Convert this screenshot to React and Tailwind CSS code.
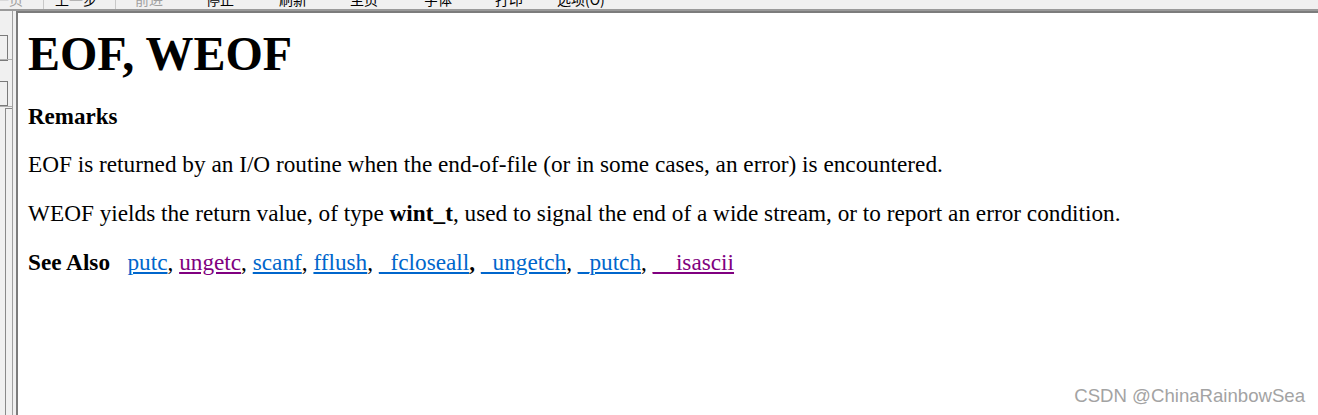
import React from 'react';

const toolbarItems = [
    { label: '上一页', disabled: true, left: -19 },
    { label: '上一步', left: 55 },
    { label: '前进', disabled: true, left: 135 },
    { label: '停止', left: 206 },
    { label: '刷新', left: 279 },
    { label: '主页', left: 350 },
    { label: '字体', left: 424 },
    { label: '打印', left: 495 },
    { label: '选项(O)', left: 557 },
];

const links = [
    { text: 'putc' },
    { text: 'ungetc', visited: true },
    { text: 'scanf' },
    { text: 'fflush' },
    { text: '_fcloseall', boldComma: true },
    { text: '_ungetch' },
    { text: '_putch' },
    { text: '__isascii', visited: true },
];

const App = () => {
    return (
        <div className="w-[1318px] h-[415px] overflow-hidden bg-[#f0f0f0] flex flex-col">
            {/* toolbar, cut off at the top of the shot */}
            <div className="relative h-[11px] shrink-0 overflow-hidden border-b-2 border-[#9a9a9a] font-['Noto_Sans_CJK_SC',sans-serif] text-[14px] leading-[14px]">
                <div className="absolute top-0 left-[43px] w-px h-full bg-[#c8c8c8]"></div>
                <div className="absolute top-0 left-[115px] w-px h-full bg-[#c8c8c8]"></div>
                {toolbarItems.map((item) => (
                    <span
                        key={item.label}
                        className={`absolute top-[-8px] whitespace-nowrap ${item.disabled ? 'text-[#a0a0a0]' : 'text-black'}`}
                        style={{ left: item.left }}
                    >
                        {item.label}
                    </span>
                ))}
            </div>

            <div className="flex flex-1 min-h-0">
                {/* left tab pane */}
                <div className="w-[12px] shrink-0 flex flex-col pt-[24px]">
                    <div className="h-[26px] w-[8px] border border-l-0 border-[#7a7a7a]"></div>
                    <div className="h-px w-[12px] bg-[#b0b0b0] mt-[-2px]"></div>
                    <div className="h-[21px]"></div>
                    <div className="h-[25px] w-[8px] border border-l-0 border-[#7a7a7a]"></div>
                    <div className="h-px w-[12px] bg-[#b0b0b0]"></div>
                    <div className="flex-1 w-[8px] ml-[5px] mt-[1px] border-l border-t border-[#8a8a8a]"></div>
                </div>
                <div className="w-px shrink-0 bg-[#a0a0a0]"></div>
                <div className="w-[3px] shrink-0"></div>

                {/* content */}
                <div className="flex-1 bg-white border-l-2 border-t-2 border-[#7c7c7c] pl-[10px] font-['Liberation_Serif',serif] text-black">
                    <h1 className="text-[48px] font-bold leading-[54px] mt-[14px]">EOF, WEOF</h1>
                    <h4 className="text-[23px] font-bold leading-[27px] mt-[22px]">Remarks</h4>
                    <p className="text-[23.25px] leading-[27px] mt-[21px]">
                        EOF is returned by an I/O routine when the end-of-file (or in some cases, an error) is encountered.
                    </p>
                    <p className="text-[23.25px] leading-[27px] mt-[22px]">
                        WEOF yields the return value, of type <b>wint_t</b>, used to signal the end of a wide stream, or to report an error condition.
                    </p>
                    <p className="text-[23.25px] leading-[27px] mt-[22px] whitespace-pre">
                        <b>See Also</b>{'   '}
                        {links.map((link, i) => (
                            <React.Fragment key={link.text}>
                                <a className={`underline ${link.visited ? 'text-[#800080]' : 'text-[#0066cc]'}`}>{link.text}</a>
                                {i < links.length - 1 && (link.boldComma ? <b>, </b> : ', ')}
                            </React.Fragment>
                        ))}
                    </p>
                </div>
            </div>

            {/* watermark */}
            <div className="relative">
                <span className="absolute right-[13px] bottom-[5px] font-['Liberation_Sans',sans-serif] text-[18.6px] text-[#a3a3a3] whitespace-nowrap">
                    CSDN @ChinaRainbowSea
                </span>
            </div>
        </div>
    );
};

export default App;
